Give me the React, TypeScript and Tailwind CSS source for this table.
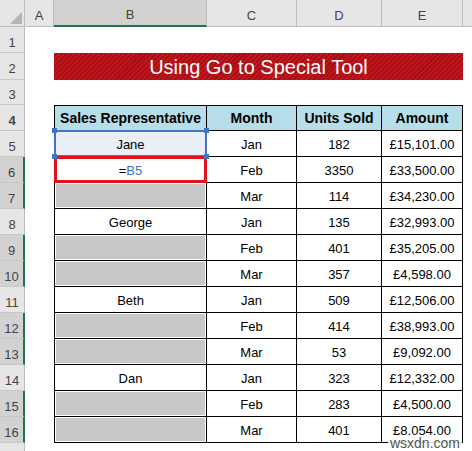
import React from "react";

type Row = { n: number; b?: string; kind: "name" | "sel" | "formula" | "gray"; c: string; d: string; e: string };

const rows: Row[] = [
  { n: 5, b: "Jane", kind: "sel", c: "Jan", d: "182", e: "£15,101.00" },
  { n: 6, kind: "formula", c: "Feb", d: "3350", e: "£33,500.00" },
  { n: 7, kind: "gray", c: "Mar", d: "114", e: "£34,230.00" },
  { n: 8, b: "George", kind: "name", c: "Jan", d: "135", e: "£32,993.00" },
  { n: 9, kind: "gray", c: "Feb", d: "401", e: "£35,205.00" },
  { n: 10, kind: "gray", c: "Mar", d: "357", e: "£4,598.00" },
  { n: 11, b: "Beth", kind: "name", c: "Jan", d: "509", e: "£12,506.00" },
  { n: 12, kind: "gray", c: "Feb", d: "414", e: "£38,993.00" },
  { n: 13, kind: "gray", c: "Mar", d: "53", e: "£9,092.00" },
  { n: 14, b: "Dan", kind: "name", c: "Jan", d: "323", e: "£12,332.00" },
  { n: 15, kind: "gray", c: "Feb", d: "283", e: "£4,500.00" },
  { n: 16, kind: "gray", c: "Mar", d: "401", e: "£8,054.00" },
];

function RowHead({ n, sel }: { n: number | string; sel?: boolean }) {
  return (
    <div
      className={
        sel
          ? "w-[25px] shrink-0 flex justify-center items-center pt-[6px] text-[13px] text-[#444] bg-[#d2d2d2] border-b border-b-[#c8c8c8] border-r-2 border-r-[#217346]"
          : "w-[25px] shrink-0 flex justify-center items-center pt-[6px] text-[13px] text-[#444] bg-[#e6e6e6] border-b border-b-[#c8c8c8] border-r border-r-[#bdbdbd]"
      }
    >
      {n}
    </div>
  );
}

function Handle({ pos }: { pos: string }) {
  return <div className={`absolute w-[5px] h-[5px] bg-[#4472c4] z-20 ${pos}`} />;
}

export default function App() {
  return (
    <div className="relative w-[472px] h-[451px] overflow-hidden bg-white font-['Liberation_Sans',Arial,sans-serif] text-black">
      {/* Column headers */}
      <div className="flex h-[27px] bg-[#e6e6e6] text-[13px] text-[#444]">
        <div className="relative w-[25px] shrink-0 border-r border-b border-[#bdbdbd]">
          <svg width="25" height="27" className="absolute left-0 top-0">
            <polygon points="22,12 22,24 10,24" fill="#b5b5b5" />
          </svg>
        </div>
        <div className="w-[29px] shrink-0 flex justify-center items-center pt-[5px] border-r border-b border-[#bdbdbd]">A</div>
        <div className="w-[153px] shrink-0 flex justify-center items-center pt-[5px] bg-[#d2d2d2] border-r border-r-[#bdbdbd] border-b-2 border-b-[#217346]">B</div>
        <div className="w-[90px] shrink-0 flex justify-center items-center pt-[5px] border-r border-b border-[#bdbdbd]">C</div>
        <div className="w-[85px] shrink-0 flex justify-center items-center pt-[5px] border-r border-b border-[#bdbdbd]">D</div>
        <div className="w-[81px] shrink-0 flex justify-center items-center pt-[5px] border-r border-b border-[#bdbdbd]">E</div>
        <div className="flex-1 border-b border-[#bdbdbd]" />
      </div>

      {/* Row 1 */}
      <div className="flex h-[26px]">
        <RowHead n={1} />
        <div className="flex-1" />
      </div>

      {/* Row 2 - title */}
      <div className="flex h-[27px]">
        <RowHead n={2} />
        <div className="w-[29px] shrink-0" />
        <div className="w-[409px] shrink-0 flex items-center justify-center pt-[1px] text-white text-[20px] [background-image:repeating-linear-gradient(135deg,#c3151c_0px,#c3151c_2px,#a10f15_2px,#a10f15_3.5px)]">
          Using Go to Special Tool
        </div>
        <div className="flex-1" />
      </div>

      {/* Row 3 */}
      <div className="flex h-[25px]">
        <RowHead n={3} />
        <div className="flex-1" />
      </div>

      {/* Row 4 - table header */}
      <div className="flex h-[26px] text-[14px] font-bold">
        <RowHead n={4} />
        <div className="w-[29px] shrink-0" />
        <div className="w-[153px] shrink-0 flex items-center justify-center pt-[1px] bg-[#b7dee8] border border-black">Sales Representative</div>
        <div className="w-[90px] shrink-0 flex items-center justify-center pt-[1px] bg-[#b7dee8] border-t border-r border-b border-black">Month</div>
        <div className="w-[85px] shrink-0 flex items-center justify-center pt-[1px] bg-[#b7dee8] border-t border-r border-b border-black">Units Sold</div>
        <div className="w-[81px] shrink-0 flex items-center justify-center pt-[1px] bg-[#b7dee8] border-t border-r border-b border-black">Amount</div>
        <div className="flex-1" />
      </div>

      {rows.map((r) => (
        <div key={r.n} className="flex h-[26px] text-[13px]">
          <RowHead n={r.n} sel={r.kind === "gray" || r.kind === "formula"} />
          <div className="w-[29px] shrink-0" />
          {r.kind === "gray" ? (
            <div className="w-[153px] shrink-0 border-l border-r border-b border-black p-[1px]">
              <div className="w-full h-full bg-[#c8c8c8]" />
            </div>
          ) : r.kind === "sel" ? (
            <div className="relative w-[153px] shrink-0 flex items-center justify-center pt-[2px] bg-[#e9eef7] border-l border-r border-b border-black">
              <div className="absolute -left-[1px] -top-[1px] -right-[1px] -bottom-[1px] border-2 border-[#4472c4] z-10" />
              <Handle pos="-left-[3px] -top-[3px]" />
              <Handle pos="-right-[3px] -top-[3px]" />
              <Handle pos="-left-[3px] -bottom-[3px]" />
              <Handle pos="-right-[3px] -bottom-[3px]" />
              <span className="relative">{r.b}</span>
            </div>
          ) : r.kind === "formula" ? (
            <div className="relative w-[153px] shrink-0 flex items-center justify-center pt-[2px] border-l border-r border-b border-black">
              <div className="absolute -left-[1px] -top-[1px] -right-[1px] -bottom-[1px] border-[3px] border-[#e0121c] z-10" />
              <span className="relative">
                =<span className="text-[#4472c4]">B5</span>
              </span>
            </div>
          ) : (
            <div className="w-[153px] shrink-0 flex items-center justify-center pt-[2px] border-l border-r border-b border-black">{r.b}</div>
          )}
          <div className="w-[90px] shrink-0 flex items-center justify-center pt-[2px] border-r border-b border-black">{r.c}</div>
          <div className="w-[85px] shrink-0 flex items-center justify-center pt-[2px] border-r border-b border-black">{r.d}</div>
          <div className="w-[81px] shrink-0 flex items-center justify-center pt-[2px] border-r border-b border-black">{r.e}</div>
          <div className="flex-1" />
        </div>
      ))}

      {/* Row 17 partial */}
      <div className="flex h-[26px]">
        <RowHead n="" />
        <div className="flex-1" />
      </div>

      {/* watermark */}
      <div className="absolute right-[10px] bottom-0 px-[2px] bg-white/85 text-[14px] leading-[16px] text-[#555]">wsxdn.com</div>
    </div>
  );
}
